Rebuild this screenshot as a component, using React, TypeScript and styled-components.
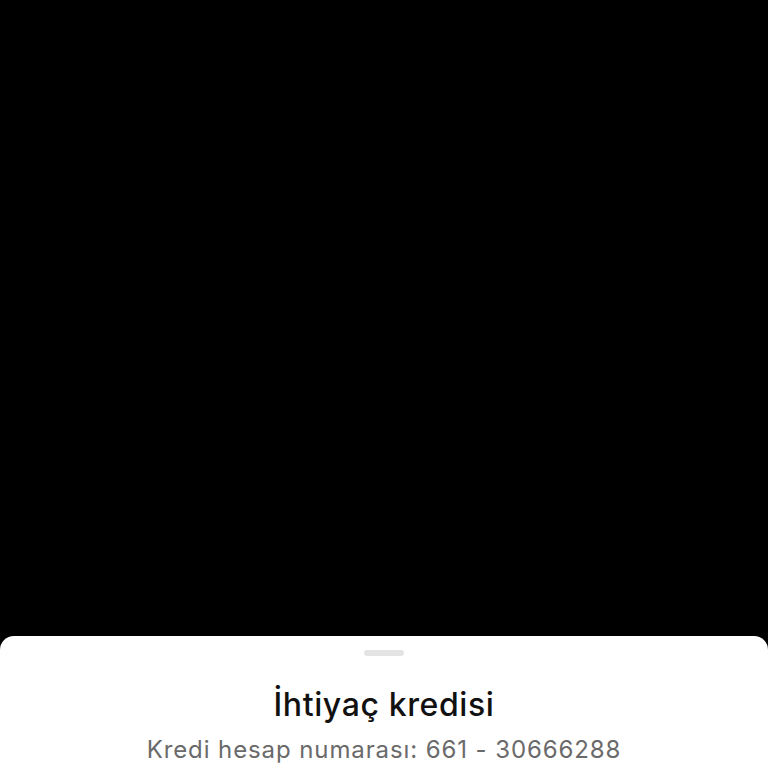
import React from "react";
import styled, { createGlobalStyle } from "styled-components";

const Global = createGlobalStyle`
  html, body { margin: 0; padding: 0; background: #000; }
  body { font-family: Inter, "Noto Sans", sans-serif; }
`;

const Page = styled.div`
  height: 768px;
  display: flex;
  flex-direction: column;
  justify-content: flex-end;
  background: #000;
  overflow: hidden;
`;

const Sheet = styled.div`
  height: 132px;
  background: #fff;
  border-radius: 14px 14px 0 0;
  display: flex;
  flex-direction: column;
  align-items: center;
  padding-top: 14px;
  box-sizing: border-box;
`;

const Handle = styled.div`
  width: 40px;
  height: 6px;
  border-radius: 3px;
  background: #e4e4e4;
`;

const Title = styled.h1`
  margin: 31px 0 0;
  font-size: 32px;
  line-height: 36px;
  font-weight: 500;
  color: #111;
  letter-spacing: 0.6px;
`;

const Subtitle = styled.p`
  margin: 12px 0 0;
  font-size: 24px;
  line-height: 30px;
  font-weight: 400;
  color: #6a6a6a;
  letter-spacing: 0.9px;
`;

export default function App() {
  return (
    <Page>
      <Global />
      <Sheet>
        <Handle />
        <Title>İhtiyaç kredisi</Title>
        <Subtitle>Kredi hesap numarası: 661 - 30666288</Subtitle>
      </Sheet>
    </Page>
  );
}
